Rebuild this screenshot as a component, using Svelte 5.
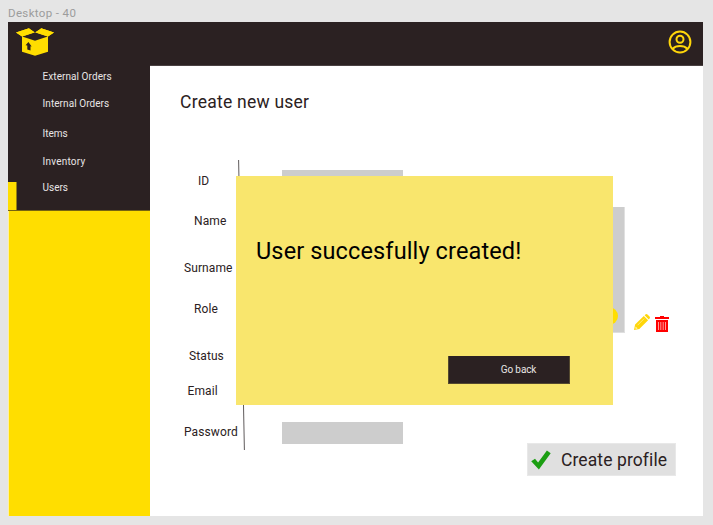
<script>
  const nav = [
    { name: 'External Orders', gap: 1, spacing: 0.07 },
    { name: 'Internal Orders', gap: 7, spacing: 0.07 },
    { name: 'Items', gap: 10, spacing: 0 },
    { name: 'Inventory', gap: 8, spacing: 0.22 },
    { name: 'Users', gap: 10, spacing: 0, active: true }
  ];
  const fields = [
    { name: 'ID', gap: 0, indent: 18, input: true, raise: 1 },
    { name: 'Name', gap: 20, indent: 14 },
    { name: 'Surname', gap: 27, indent: 4 },
    { name: 'Role', gap: 21, indent: 14 },
    { name: 'Status', gap: 27, indent: 9 },
    { name: 'Email', gap: 15, indent: 7.5 },
    { name: 'Password', gap: 21, indent: 4, input: true, raise: 0 }
  ];
</script>

<div class="canvas">
  <div class="frame-name">Desktop - 40</div>
  <div class="frame">
    <header>
      <svg class="logo" width="38" height="28" viewBox="0 0 38 28">
        <path fill="#ffde00" d="M0 4.5 13 .3 19 4.1 25.2.3 38 4.5 32 8.6V23.8L19 27.8 6 23.8V8.6Z" />
        <path fill="#2b2122" d="M6.2 8.4 19 4.2 31.8 8.4 19 12.7Z" />
        <path fill="#ffde00" d="M0 4.5 13 .3 18.4 4.4 6.1 8.6ZM38 4.5 25.2.3 19.6 4.4 31.9 8.6Z" />
        <path fill="#2b2122" d="M19 0 13.2.2 19 4.2 25 .2Z" />
        <path fill="#2b2122" d="m12.4 14.1 3.3 4.4-1.2-.2v4.1l-3.2-.8v-4l-1.7-.3Z" />
      </svg>
      <svg class="user" width="24" height="24" viewBox="0 0 24 24" fill="none" stroke="#ffd60a" stroke-width="2">
        <circle cx="12" cy="12" r="10.4" />
        <circle cx="12" cy="9.3" r="3.5" />
        <path d="M4.7 18.8C8 15.2 16 15.2 19.3 18.8" />
      </svg>
    </header>
    <div class="body">
      <aside>
        <nav>
          {#each nav as item}
            <a
              href="#{item.name}"
              class:active={item.active}
              style="margin-top: {item.gap}px; letter-spacing: {item.spacing}px">{item.name}</a>
          {/each}
        </nav>
      </aside>
      <main>
        <h1>Create new user</h1>
        <div class="form">
          <svg class="divider" width="8" height="290" viewBox="0 0 8 290">
            <path d="M.6 0 6.4 290" stroke="#4d4748" stroke-width=".9" />
          </svg>
          <div class="fields">
            {#each fields as field}
              <div class="row" style="margin-top: {field.gap}px">
                <span class="label" style="padding-left: {field.indent}px">{field.name}</span>
                {#if field.input}<span class="input" style="margin-bottom: {field.raise * 2 - 2}px"></span>{/if}
              </div>
            {/each}
          </div>
          <div class="photo"><span class="dot"></span></div>
          <div class="tools">
            <svg width="16" height="16" viewBox="0 0 16 16">
              <path fill="#ffd60a" d="M0 16 1.1 10.6 9.8 1.9 14.1 6.2 5.3 14.9ZM10.6 1.2 11.4.4Q12.5-.4 13.5.5L15.5 2.5Q16.4 3.5 15.6 4.6L14.8 5.4Z" />
              <path fill="none" stroke="#fff3a8" stroke-width=".7" d="M3.6 11.2 10.2 4.6" />
              <path fill="#fff3a8" d="m1.6 12.5 2 2-1.6.4-.7-.7Z" />
            </svg>
            <svg width="14" height="16" viewBox="0 0 14 16">
              <path fill="#f00" d="M5 0H9V1H14V3H0V1H5ZM1 4H13V16H1Z" />
              <path stroke="#ff9a9a" stroke-width="1" d="M3.5 6V14M5.8 6V14M8.2 6V14M10.5 6V14" />
            </svg>
          </div>
        </div>
        <button class="create">
          <svg width="20" height="20" viewBox="0 0 20 20">
            <path fill="#1b9e12" d="M.2 11.3 4 8.7 7.1 12.5 15.9.4 19.7 3.3 7.9 19.6Z" />
          </svg>
          <span>Create profile</span>
        </button>
      </main>
    </div>
  </div>
  <div class="modal" role="dialog">
    <p>User succesfully created!</p>
    <button>Go back</button>
  </div>
</div>

<style>
  .canvas {
    position: relative;
    box-sizing: border-box;
    width: 713px;
    height: 525px;
    padding: 0 10px 9px 8px;
    background: #e5e5e5;
    font-family: Roboto, "Noto Sans", sans-serif;
    color: #2b2122;
    overflow: hidden;
  }
  .frame-name {
    height: 22px;
    line-height: 26px;
    font-size: 11.5px;
    letter-spacing: 0.36px;
    color: #9c9c9c;
  }
  .frame {
    height: 494px;
    background: #fff;
    display: flex;
    flex-direction: column;
  }
  header {
    box-sizing: border-box;
    height: 44px;
    padding: 0 11px 0 8px;
    display: flex;
    justify-content: space-between;
    background: #2b2122;
    border-bottom: 1px solid #4a4142;
  }
  .logo {
    margin-top: 6px;
  }
  .user {
    margin-top: 8px;
  }
  .body {
    flex: 1;
    display: flex;
  }
  aside {
    width: 142px;
    background: #ffde00;
    box-shadow: inset 1px 0 #fff0a0;
  }
  nav {
    height: 145px;
    display: flex;
    flex-direction: column;
    background: #2b2122;
    border-bottom: 1px solid #766410;
    box-sizing: border-box;
    box-shadow: 0 -1px #2b2122;
  }
  nav a {
    box-sizing: border-box;
    height: 20px;
    line-height: 20px;
    padding-left: 34.5px;
    font-size: 10px;
    color: #e8e5e5;
    text-decoration: none;
    flex: none;
  }
  nav a.active {
    height: 28px;
    line-height: 12px;
    background: linear-gradient(#ffde00, #ffde00) 0 0 / 8.5px 28px no-repeat;
  }
  main {
    flex: 1;
  }
  h1 {
    margin: 24px 0 0 30px;
    height: 24px;
    line-height: 24px;
    font-size: 17.5px;
    font-weight: 400;
    letter-spacing: 0.24px;
  }
  .form {
    position: relative;
    display: flex;
    height: 290px;
    margin: 46px 0 0 30px;
  }
  .divider {
    position: absolute;
    left: 58px;
    top: 0;
  }
  .fields {
    width: 223px;
    padding-top: 11px;
  }
  .row {
    display: flex;
    align-items: center;
    height: 20px;
  }
  .label {
    box-sizing: border-box;
    width: 102px;
    font-size: 12px;
    letter-spacing: 0.1px;
    flex: none;
  }
  .input {
    width: 121px;
    height: 22px;
    flex: none;
    background: #cdcdcd;
  }
  .photo {
    width: 121px;
    height: 126px;
    margin: 47px 0 0 100px;
    background: #cdcdcd;
    box-shadow: inset 0 -1px #dedede, 1px 0 #e0e0e0;
    display: flex;
    justify-content: flex-end;
    align-items: flex-end;
  }
  .dot {
    width: 18px;
    height: 18px;
    margin: 0 6px 8px 0;
    border-radius: 50%;
    background: #ffde00;
  }
  .tools {
    display: flex;
    gap: 5px;
    margin: 154px 0 0 10px;
  }
  .tools svg:last-child {
    margin-top: 2px;
  }
  .create {
    box-sizing: border-box;
    width: 149px;
    height: 33px;
    margin: -7px 0 0 377px;
    padding: 0 0 0 3px;
    display: flex;
    align-items: center;
    gap: 10px;
    border: 1px solid #e8e8e8;
    background: #e0e0e0;
    color: #2b2122;
    font: 400 17.5px Roboto, sans-serif;
    letter-spacing: 0.1px;
  }
  .modal {
    position: absolute;
    left: 236px;
    top: 176px;
    width: 377px;
    height: 229px;
    background: #f9e66d;
    display: flex;
    flex-direction: column;
  }
  .modal p {
    margin: 59px 0 0 20px;
    height: 32px;
    line-height: 32px;
    font-size: 23.5px;
    letter-spacing: 0.13px;
    color: #000;
    white-space: nowrap;
  }
  .modal button {
    box-sizing: border-box;
    width: 122px;
    height: 28px;
    margin: 89px 0 0 212px;
    padding: 0 0 0 19px;
    border: 1px solid #54492f;
    border-width: 0 1px 1px 1px;
    background: #2b2122;
    color: #e8e5e5;
    font: 400 10px Roboto, sans-serif;
    letter-spacing: -0.1px;
  }
</style>
